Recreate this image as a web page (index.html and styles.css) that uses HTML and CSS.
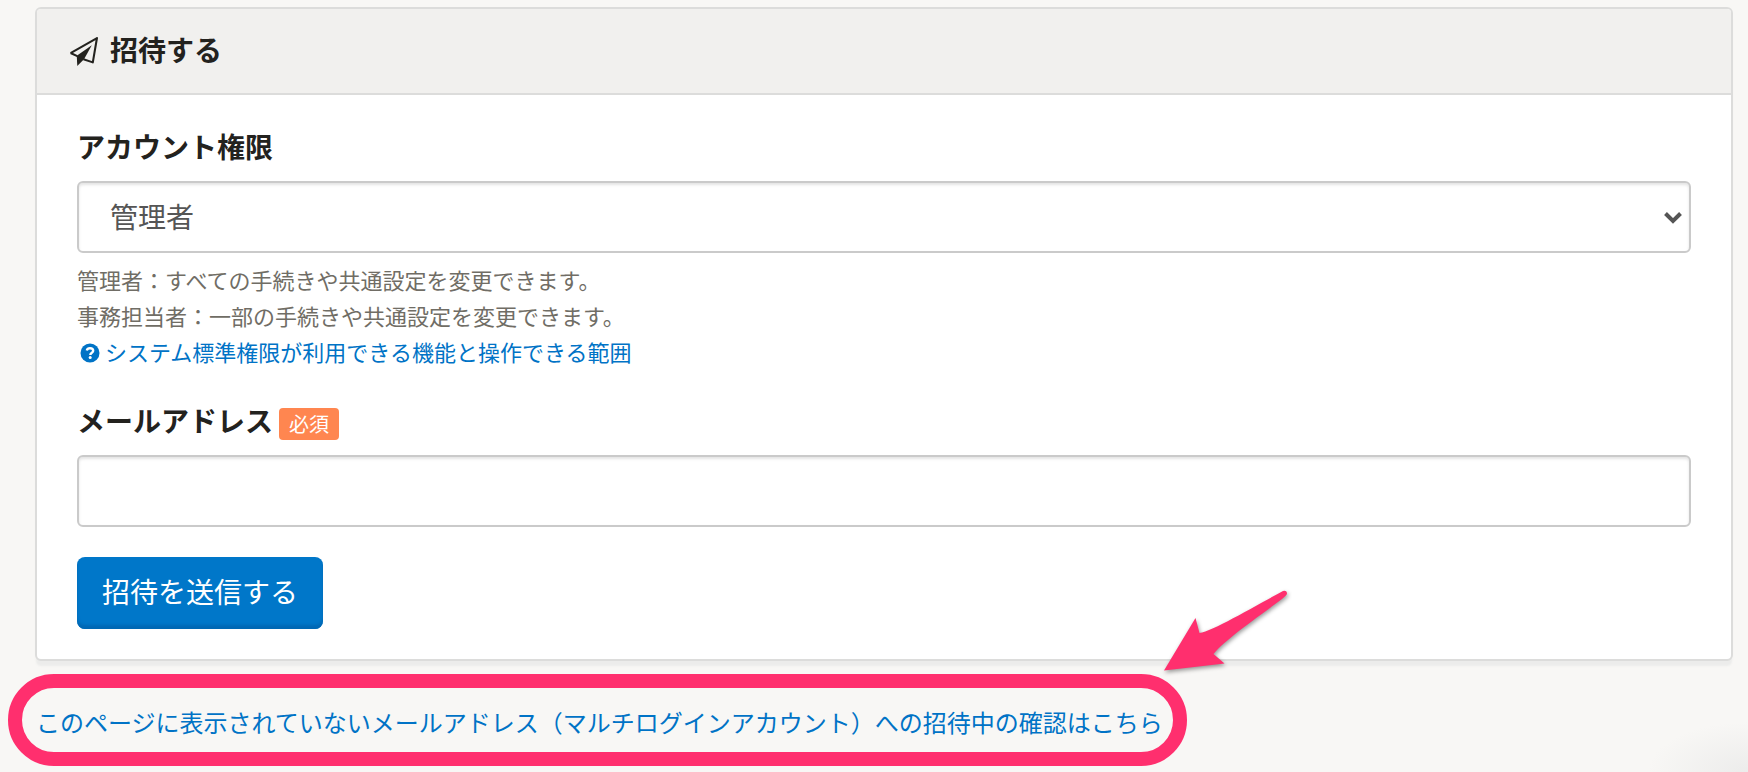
FILE: index.html
```html
<!DOCTYPE html>
<html lang="ja">
<head>
	<meta charset="UTF-8">
	<meta name="viewport" content="width=device-width, initial-scale=1">
	<title>招待する</title>
	<link rel="stylesheet" href="styles.css">
</head>
<body>
	<section class="panel">
		<header class="panel-header">
			<svg class="icon-plane" viewBox="0 0 28 28" aria-hidden="true">
				<path d="M1.500 15.500L27 1L23 24.500L14 21.500M8 18.500L1.500 15.500" fill="none" stroke="currentColor" stroke-width="2" stroke-linejoin="round"/>
				<path d="M7.500 18L22 8L14.500 21.500L8 28Z" fill="currentColor"/>
			</svg>
			<h1 class="panel-title">招待する</h1>
		</header>
		<form class="panel-body">
			<div class="field">
				<div class="field-label">
					<label for="role">アカウント権限</label>
				</div>
				<div class="select-wrap">
					<select class="control" id="role">
						<option>管理者</option>
						<option>事務担当者</option>
					</select>
					<svg class="icon-chevron" viewBox="0 0 20 14" aria-hidden="true">
						<path d="M2.500 2.500L10 10L17.500 2.500" fill="none" stroke="currentColor" stroke-width="4"/>
					</svg>
				</div>
				<div class="help">
					<p>管理者：すべての手続きや共通設定を変更できます。</p>
					<p>事務担当者：一部の手続きや共通設定を変更できます。</p>
					<a class="help-link" href="#">
						<svg class="icon-help" viewBox="0 0 20 20" aria-hidden="true">
							<circle cx="10" cy="10" r="9.500" fill="currentColor"/>
							<path d="M6.800 7.600C7.200 5.900 8.400 5.200 10 5.200C11.800 5.200 13.200 6.200 13.200 7.800C13.200 9.800 10.300 9.700 10.300 12" fill="none" stroke="#fff" stroke-width="2.400"/>
							<circle cx="10.200" cy="14.600" r="1.500" fill="#fff"/>
						</svg>
						<span>システム標準権限が利用できる機能と操作できる範囲</span>
					</a>
				</div>
			</div>
			<div class="field">
				<div class="field-label">
					<label for="email">メールアドレス</label>
					<span class="badge">必須</span>
				</div>
				<input class="control" type="email" id="email" required>
			</div>
			<button class="btn" type="submit">招待を送信する</button>
		</form>
	</section>

	<div class="callout">
		<a href="#">このページに表示されていないメールアドレス（マルチログインアカウント）への招待中の確認はこちら</a>
		<svg class="callout-arrow" viewBox="0 0 130 90" aria-hidden="true">
			<path d="M5 84.500L36.500 32L40.500 47C54 45 96 20 124 5Q128 4 128 8Q127 10 123 13C92 36 66 54 54.500 68L65.500 77.500Z" fill="#ff2f6e"/>
		</svg>
	</div>
</body>
</html>
```

FILE: styles.css
```css
*{
	box-sizing: border-box;
	margin: 0;
	padding: 0;
}
body{
	min-height: 100vh;
	padding: 7px 15px 6px 8px;
	background: radial-gradient(ellipse 100px 50px at 100% 100%, #ececeb, #f8f7f5) no-repeat #f8f7f5;
	color: #23221e;
	font-family: "Noto Sans CJK JP", sans-serif;
	font-size: 28px;
}
a{
	color: #0073c6;
	text-decoration: none;
}

/* パネル */
.panel{
	margin-left: 27px;
	border: 2px solid #dcdcdb;
	border-radius: 6px;
	background: #fff;
	box-shadow: 0 6px 2px -1px #ececeb;
}
.panel-header{
	display: flex;
	align-items: center;
	gap: 12px;
	height: 86px;
	padding: 0 32px;
	border-bottom: 2px solid #dcdcdb;
	border-radius: 4px 4px 0 0;
	background: #f1f0ee;
}
.panel-title{
	padding-bottom: 4px;
	font-size: 28px;
	line-height: 40px;
}
.icon-plane{
	width: 29px;
	height: 29px;
}
.panel-body{
	display: flex;
	flex-direction: column;
	align-items: flex-start;
	gap: 30px;
	padding: 31px 40px 30px;
}

/* フォーム */
.field{
	width: 100%;
}
.field-label{
	display: flex;
	align-items: flex-end;
	gap: 6px;
	margin-bottom: 15px;
	font-weight: 700;
	line-height: 40px;
}
.badge{
	padding: 0 10px;
	border-radius: 4px;
	background: #ff8650;
	color: #fff;
	font-size: 20px;
	font-weight: 400;
	line-height: 32px;
}
.control{
	display: block;
	width: 100%;
	height: 72px;
	padding: 0 31px 2px;
	border: 2px solid #cacaca;
	border-radius: 6px;
	background: #fff;
	box-shadow: inset 0 2px 3px #e4e4e4;
	color: #555;
	font: inherit;
	appearance: none;
}
.select-wrap{
	position: relative;
}
.icon-chevron{
	position: absolute;
	top: 30px;
	right: 8px;
	width: 20px;
	height: 14px;
	color: #555;
	pointer-events: none;
}
.help{
	padding: 8px 0 1px;
	color: #706d65;
	font-size: 22px;
	line-height: 36px;
}
.help-link{
	display: flex;
	align-items: center;
	gap: 5px;
	padding-left: 3px;
}
.icon-help{
	width: 20px;
	height: 20px;
	margin-top: 4px;
}
.btn{
	height: 72px;
	padding: 0 25px 4px;
	border: 0;
	border-radius: 8px;
	background: #0077c9;
	box-shadow: inset 0 -4px 3px #0068b4;
	color: #fff;
	font: inherit;
	cursor: pointer;
}

/* 強調表示 */
.callout{
	position: relative;
	width: fit-content;
	margin-top: 13px;
	padding: 16px 10px 12px 14px;
	border: 14px solid #ff2f6e;
	border-radius: 46px;
	font-size: 24px;
	line-height: 36px;
}
.callout a{
	display: block;
}
.callout-arrow{
	position: absolute;
	right: -116px;
	bottom: 76px;
	width: 130px;
	height: 90px;
	filter: drop-shadow(1px 2px 2px rgba(0,0,0,.4));
}
```
